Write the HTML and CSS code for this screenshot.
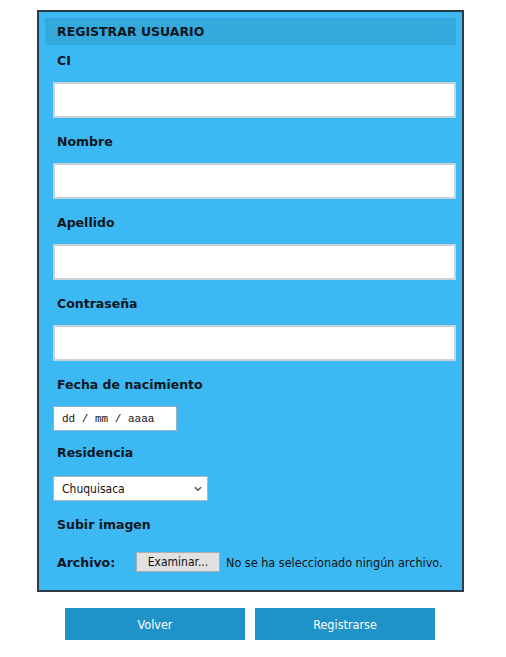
FILE: index.html
```html
<!DOCTYPE html>
<html lang="es">
<head>
<meta charset="utf-8">
<title>Registrar usuario</title>
<link rel="stylesheet" href="styles.css">
</head>
<body>
<div class="page">
  <form class="card">
    <div class="card-title">REGISTRAR USUARIO</div>

    <label class="field-label first" for="ci">CI</label>
    <input class="text-input" id="ci" type="text">

    <label class="field-label" for="nombre">Nombre</label>
    <input class="text-input" id="nombre" type="text">

    <label class="field-label" for="apellido">Apellido</label>
    <input class="text-input" id="apellido" type="text">

    <label class="field-label" for="pass">Contraseña</label>
    <input class="text-input" id="pass" type="password">

    <label class="field-label" for="fecha">Fecha de nacimiento</label>
    <input class="date-input" id="fecha" type="text" placeholder="dd / mm / aaaa">

    <label class="field-label res" for="res">Residencia</label>
    <div class="select-box" id="res">
      <span class="select-text">Chuquisaca</span>
      <svg class="chevron" width="8" height="6" viewBox="0 0 8 6"><path d="M1 1.2 L4 4.2 L7 1.2" fill="none" stroke="#555" stroke-width="1.6"/></svg>
    </div>

    <div class="field-label upload">Subir imagen</div>
    <div class="file-row">
      <span class="file-label">Archivo:</span>
      <span class="file-btn">Examinar...</span>
      <span class="file-text">No se ha seleccionado ningún archivo.</span>
    </div>
  </form>
  <div class="actions">
    <button class="action-btn" type="button">Volver</button>
    <button class="action-btn" type="button">Registrarse</button>
  </div>
</div>
</body>
</html>
```
FILE: styles.css
```css
* { box-sizing: border-box; }
body {
  margin: 0;
  background: #ffffff;
  font-family: "Liberation Sans", Arial, sans-serif;
}
.page {
  width: 427px;
  margin: 10px 0 0 37px;
}
.card {
  display: flex;
  flex-direction: column;
  align-items: flex-start;
  margin: 0;
  border: 2px solid #2e3c4a;
  background: #3cb9f2;
  padding: 6px 6px 18px;
}
.card-title {
  align-self: stretch;
  height: 27px;
  line-height: 27px;
  background: #34a9dc;
  padding-left: 12px;
  font-family: "DejaVu Sans", Verdana, sans-serif;
  font-size: 12.5px;
  font-weight: bold;
  color: #0b1622;
}
.field-label {
  display: block;
  height: 16px;
  line-height: 16px;
  margin-top: 16px;
  padding-left: 12px;
  font-family: "DejaVu Sans", Verdana, sans-serif;
  font-size: 12.5px;
  font-weight: bold;
  color: #0b1622;
}
.field-label.first { margin-top: 8px; }
.field-label.res { margin-top: 14px; }
.text-input {
  display: block;
  margin: 13px 0 0 8px;
  width: 403px;
  height: 36px;
  border: 2px solid #c7d1d7;
  background: #ffffff;
  padding: 0 8px;
  font-size: 13px;
  outline: none;
}
.date-input {
  display: block;
  margin: 13px 0 0 8px;
  width: 124px;
  height: 25px;
  border: 1px solid #8db3c6;
  background: #ffffff;
  padding: 0 0 0 8px;
  font-family: "Liberation Mono", "Courier New", monospace;
  font-size: 11px;
  outline: none;
}
.date-input::placeholder { color: #111111; opacity: 1; }
.select-box {
  display: flex;
  align-items: center;
  justify-content: space-between;
  margin: 15px 0 0 8px;
  width: 155px;
  height: 25px;
  border: 1px solid #a6b6bf;
  background: #ffffff;
  padding: 0 5px 0 8px;
  font-family: "DejaVu Sans Condensed", "DejaVu Sans", sans-serif;
  font-size: 12px;
  color: #111111;
}
.chevron { display: block; margin-top: 1px; }
.file-row {
  display: flex;
  align-items: center;
  margin-top: 19px;
  padding-left: 12px;
  height: 20px;
}
.file-label {
  width: 79px;
  font-family: "DejaVu Sans", Verdana, sans-serif;
  font-size: 12.5px;
  font-weight: bold;
  color: #0b1622;
}
.file-btn {
  display: flex;
  align-items: center;
  justify-content: center;
  width: 84px;
  height: 20px;
  border: 1px solid #adadad;
  background: #e1e1e1;
  font-family: "DejaVu Sans Condensed", "DejaVu Sans", sans-serif;
  font-size: 12px;
  color: #111111;
}
.file-text {
  margin-left: 6px;
  font-family: "DejaVu Sans Condensed", "DejaVu Sans", sans-serif;
  font-size: 12.5px;
  color: #111111;
}
.actions {
  display: flex;
  gap: 10px;
  margin-top: 16px;
  padding-left: 28px;
}
.action-btn {
  width: 180px;
  height: 32px;
  border: none;
  background: #1f93c7;
  color: #ffffff;
  font-family: "DejaVu Sans Condensed", "DejaVu Sans", sans-serif;
  font-size: 12.5px;
  padding: 0;
}
```
